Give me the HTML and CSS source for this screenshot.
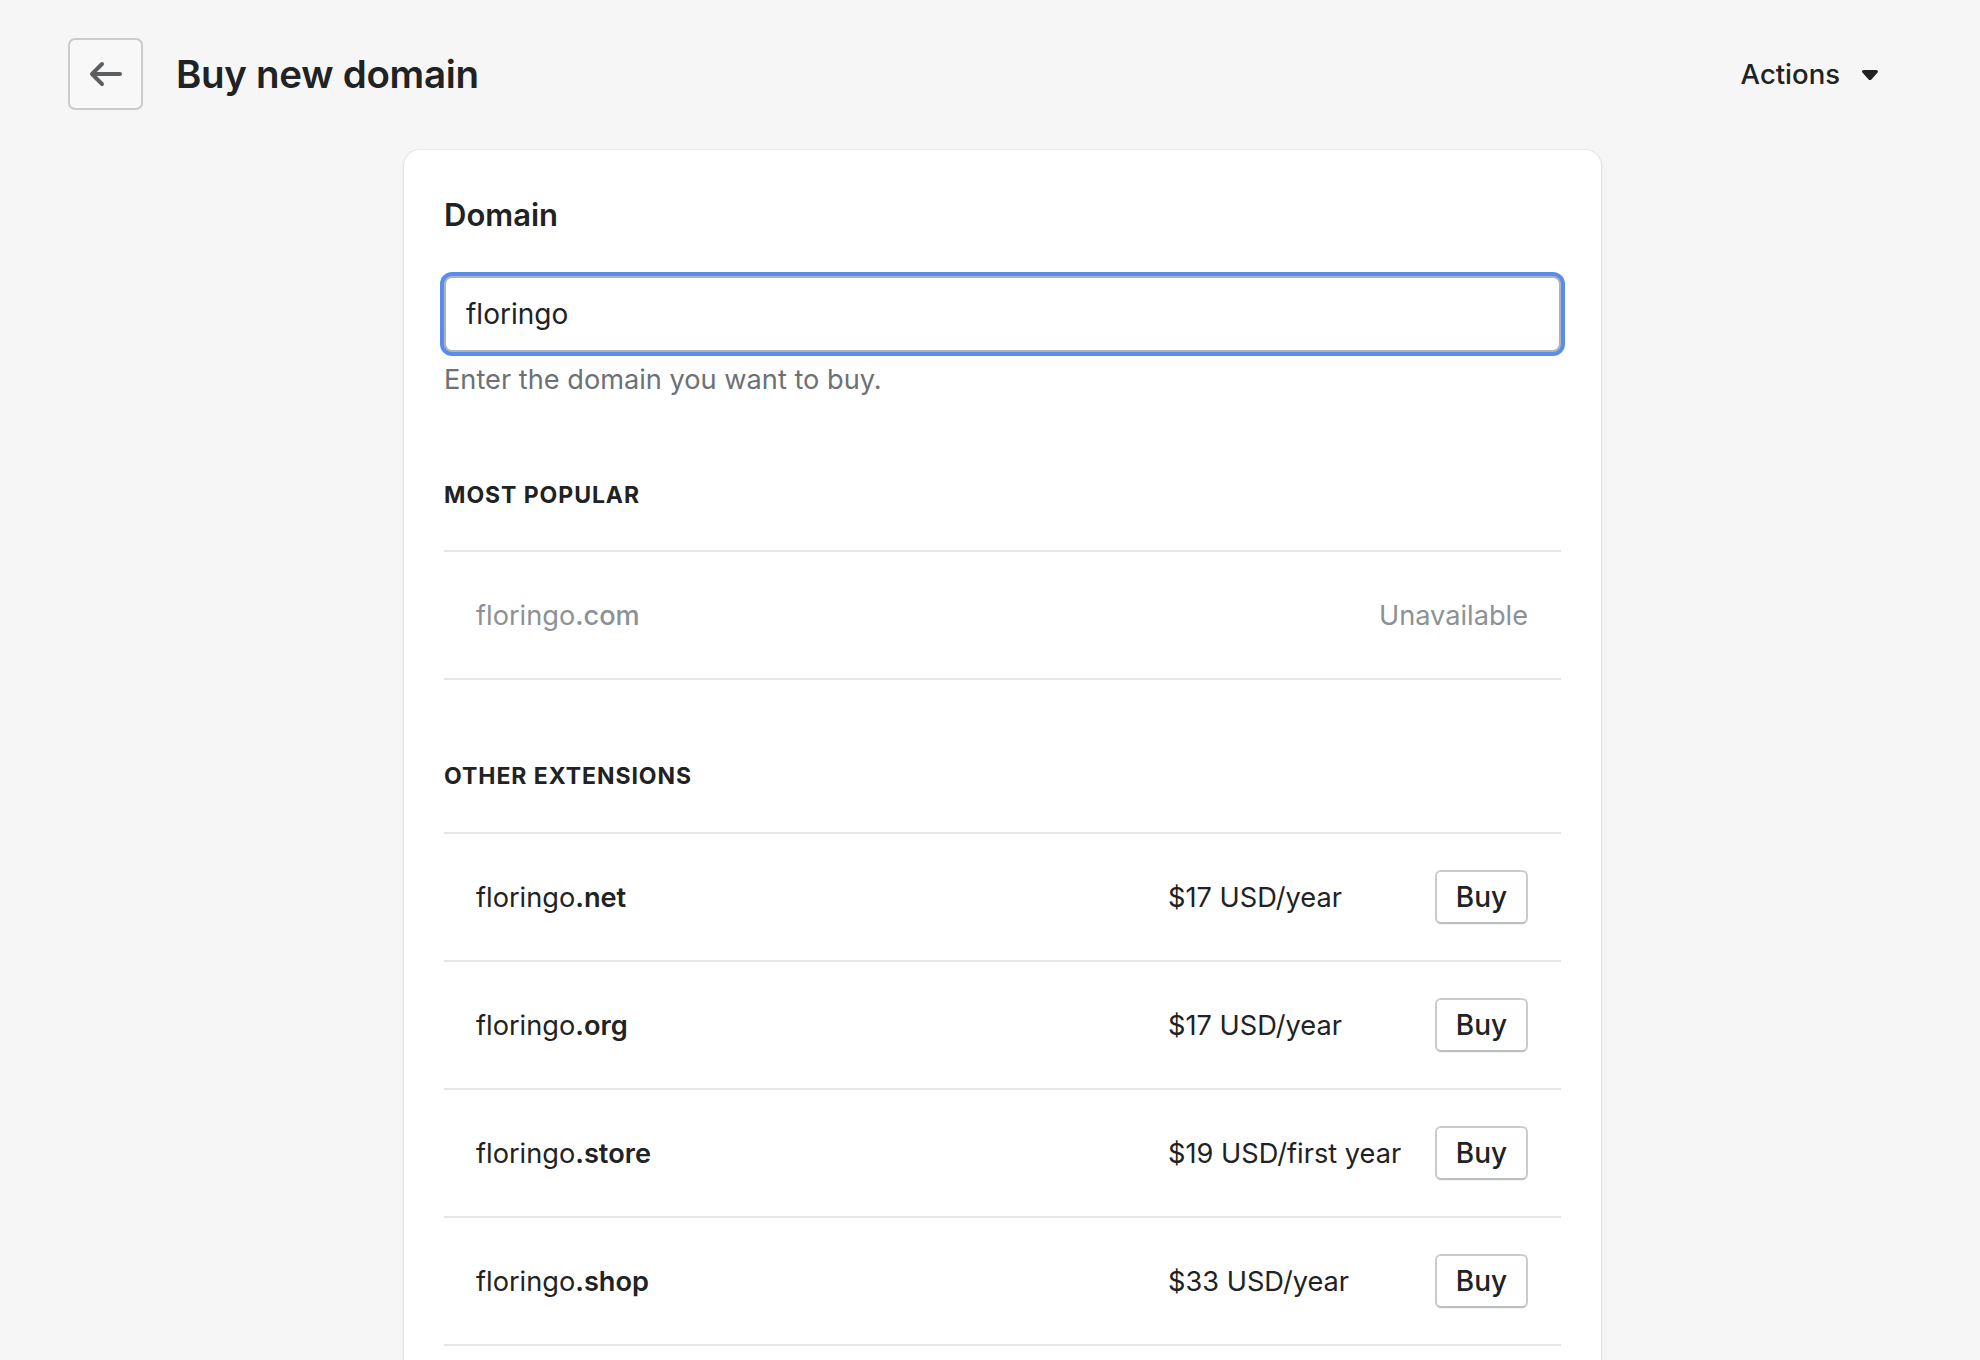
FILE: index.html
```html
<!DOCTYPE html>
<html lang="en">
<head>
<meta charset="utf-8">
<title>Buy new domain</title>
<link rel="stylesheet" href="styles.css">
</head>
<body>
<div class="page">
  <header class="page-header">
    <button class="back-btn" aria-label="Back">
      <svg viewBox="0 0 20 20" width="40" height="40"><path fill="#5c5f62" d="M17 9H5.414l3.293-3.293a.999.999 0 1 0-1.414-1.414l-5 5a.999.999 0 0 0 0 1.414l5 5a.997.997 0 0 0 1.414 0 .999.999 0 0 0 0-1.414L5.414 11H17a1 1 0 1 0 0-2z"/></svg>
    </button>
    <h1 class="title">Buy new domain</h1>
    <div class="actions">
      <span>Actions</span>
      <svg viewBox="0 0 20 20" width="40" height="40"><path fill="#202223" d="M13.098 8H6.902c-.751 0-1.172.754-.708 1.268L9.292 12.7c.36.399 1.055.399 1.416 0l3.098-3.433C14.27 8.754 13.849 8 13.098 8z"/></svg>
    </div>
  </header>

  <main class="layout">
    <section class="card">
      <h2 class="card-title">Domain</h2>
      <div class="field">
        <input class="input" type="text" value="floringo">
      </div>
      <p class="help">Enter the domain you want to buy.</p>

      <h3 class="section-title">MOST POPULAR</h3>
      <ul class="list">
        <li class="row row-unavailable">
          <span class="name">floringo<b>.com</b></span>
          <span class="status">Unavailable</span>
        </li>
      </ul>

      <h3 class="section-title section-title-other">OTHER EXTENSIONS</h3>
      <ul class="list">
        <li class="row">
          <span class="name">floringo<b>.net</b></span>
          <span class="price">$17 USD/year</span>
          <button class="buy">Buy</button>
        </li>
        <li class="row">
          <span class="name">floringo<b>.org</b></span>
          <span class="price">$17 USD/year</span>
          <button class="buy">Buy</button>
        </li>
        <li class="row">
          <span class="name">floringo<b>.store</b></span>
          <span class="price">$19 USD/first year</span>
          <button class="buy">Buy</button>
        </li>
        <li class="row">
          <span class="name">floringo<b>.shop</b></span>
          <span class="price">$33 USD/year</span>
          <button class="buy">Buy</button>
        </li>
      </ul>
    </section>
  </main>
</div>
</body>
</html>
```

FILE: styles.css
```css
* { box-sizing: border-box; }

html, body {
  margin: 0;
  padding: 0;
  background: #f6f6f7;
  font-family: Inter, "Noto Sans", "Liberation Sans", sans-serif;
  color: #202223;
  height: 100%;
  overflow: hidden;
}

.page {
  padding: 38px 90px 0 68px;
}

.page-header {
  display: flex;
  align-items: center;
  height: 72px;
}

.back-btn {
  width: 75px;
  height: 72px;
  border: 2px solid #c9cccf;
  border-radius: 7px;
  background: #f8f8f8;
  display: flex;
  align-items: center;
  justify-content: center;
  padding: 0;
  cursor: pointer;
}

.title {
  margin: 0 0 0 33px;
  font-size: 38.5px;
  font-weight: 600;
  letter-spacing: -0.3px;
  line-height: 1;
}

.actions {
  margin-left: auto;
  display: flex;
  align-items: center;
  gap: 10px;
  font-size: 27.5px;
  font-weight: 500;
}

.layout {
  margin: 40px 0 0 336px;
  width: 1197px;
}

.card {
  background: #ffffff;
  border-radius: 16px;
  box-shadow: 0 0 0 1px rgba(63, 63, 68, 0.05), 0 2px 4px rgba(63, 63, 68, 0.12);
  padding: 39px 40px 40px 40px;
}

.card-title {
  margin: 0;
  font-size: 31px;
  font-weight: 600;
  line-height: 52px;
}

.field {
  margin-top: 35px;
}

.input {
  display: block;
  width: 100%;
  height: 76px;
  border: 2px solid #aeb4b9;
  border-radius: 8px;
  box-shadow: 0 0 0 4px #5a8ceb;
  padding: 0 20px;
  font-family: inherit;
  font-size: 28px;
  color: #202223;
  outline: none;
  background: #fff;
}

.help {
  margin: 8px 0 0;
  font-size: 27.2px;
  line-height: 40px;
  color: #6d7175;
}

.section-title {
  margin: 79px 0 39px;
  font-size: 23px;
  font-weight: 700;
  letter-spacing: 0.95px;
  line-height: 32px;
}

.section-title-other {
  margin: 80px 0 40px;
}

.list {
  list-style: none;
  margin: 0;
  padding: 0;
  border-top: 2px solid #e4e5e7;
}

.row {
  display: flex;
  align-items: center;
  height: 128px;
  padding: 0 33px 0 32px;
  border-bottom: 2px solid #e4e5e7;
  font-size: 27.2px;
}

.name {
  flex: 1;
  white-space: nowrap;
}

.name b {
  font-weight: 600;
}

.row-unavailable .name,
.row-unavailable .status {
  color: #8c9196;
}

.row-unavailable .name b {
  font-weight: 500;
}

.price {
  width: 232px;
  margin-right: 35px;
  white-space: nowrap;
}

.buy {
  height: 54px;
  width: 93px;
  border: 2px solid #c9cccf;
  border-bottom-color: #babfc3;
  border-radius: 6px;
  background: #fff;
  font-family: inherit;
  font-size: 28px;
  font-weight: 500;
  color: #202223;
  padding: 0;
  box-shadow: 0 1px 0 rgba(0, 0, 0, 0.05);
  cursor: pointer;
}
```
